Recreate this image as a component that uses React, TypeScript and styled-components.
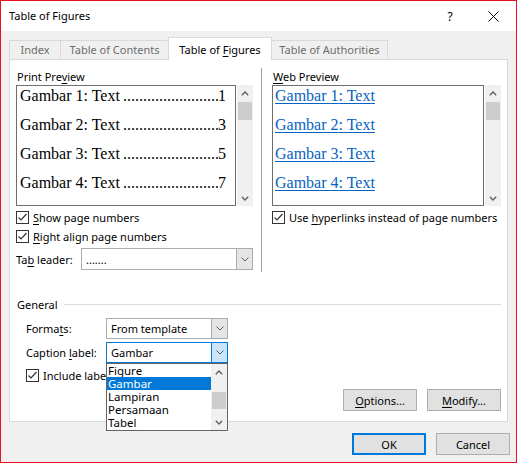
import React from "react";
import styled, { createGlobalStyle, css } from "styled-components";

const GlobalStyle = createGlobalStyle`
  html, body { margin: 0; padding: 0; background: #ffffff; }
  body { font-family: "Noto Sans", "DejaVu Sans", sans-serif; font-size: 11px; color: #000; }
  * { box-sizing: border-box; }
`;

const Window = styled.div`
  position: relative;
  width: 517px;
  height: 463px;
  border: 1px solid #e81123;
  background: #f0f0f0;
  display: flex;
  flex-direction: column;
`;

const TitleBar = styled.div`
  height: 30px;
  background: #ffffff;
  display: flex;
  align-items: center;
  padding-left: 8px;
`;

const Title = styled.div`
  flex: 1;
  line-height: 16px;
`;

const TitleButton = styled.div<{ $w: number }>`
  width: ${(p) => p.$w}px;
  height: 30px;
  display: flex;
  align-items: center;
  justify-content: center;
  font-size: 12px;
`;

const Body = styled.div`
  display: flex;
  flex-direction: column;
  padding: 0 8px;
`;

const TabRow = styled.div`
  position: relative;
  z-index: 1;
  display: flex;
  align-items: flex-end;
  height: 22px;
  margin-top: 6px;
`;

const Tab = styled.div<{ $w: number; $active?: boolean }>`
  width: ${(p) => p.$w}px;
  height: 19px;
  margin-left: -1px;
  border: 1px solid #d9d9d9;
  border-bottom: none;
  background: #f0f0f0;
  color: #6d6d6d;
  display: flex;
  justify-content: center;
  align-items: flex-start;
  padding-top: 1px;
  line-height: 16px;
  &:first-child { margin-left: 0; }
  ${(p) =>
    p.$active &&
    css`
      height: 23px;
      margin-bottom: -1px;
      background: #ffffff;
      color: #000;
      padding-top: 4px;
    `}
`;

const Panel = styled.div`
  height: 363px;
  background: #ffffff;
  border: 1px solid #d9d9d9;
  display: flex;
  flex-direction: column;
`;

const TopSection = styled.div`
  display: flex;
  padding: 8px 6px 0 6px;
`;

const Column = styled.div<{ $w: number }>`
  width: ${(p) => p.$w}px;
  display: flex;
  flex-direction: column;
`;

const Divider = styled.div`
  width: 1px;
  height: 204px;
  background: #a0a0a0;
  margin: 0 10px 0 8px;
`;

const GroupLabel = styled.div`
  line-height: 17px;
  height: 17px;
  padding-left: 1px;
`;

const Mn = styled.span`
  text-decoration: underline;
  text-underline-offset: 2px;
  text-decoration-thickness: 1px;
`;

const PreviewRow = styled.div`
  display: flex;
  gap: 1px;
  height: 121px;
`;

const PreviewBox = styled.div<{ $padR: number }>`
  flex: 1;
  min-width: 0;
  border: 1px solid #6e6e6e;
  padding: 1px ${(p) => p.$padR}px 0 2px;
  display: flex;
  flex-direction: column;
  gap: 11px;
  overflow: hidden;
  font-family: "Liberation Serif", "Times New Roman", serif;
  font-size: 16px;
`;

const PrintLine = styled.div`
  display: flex;
  line-height: 18px;
  white-space: nowrap;
  padding-left: 1px;
`;

const Leader = styled.span`
  flex: 1;
  overflow: hidden;
  white-space: nowrap;
  text-align: right;
  padding-left: 3px;
`;

const WebLine = styled.div`
  line-height: 18px;
  white-space: nowrap;
  color: #0563c1;
  span {
    text-decoration: underline;
    text-underline-offset: 2px;
    text-decoration-thickness: 1px;
  }
`;

const ScrollBar = styled.div<{ $w: number }>`
  width: ${(p) => p.$w}px;
  background: #f0f0f0;
  display: flex;
  flex-direction: column;
`;

const ScrollArrow = styled.div`
  height: 16px;
  display: flex;
  align-items: center;
  justify-content: center;
  flex-shrink: 0;
`;

const ScrollTrack = styled.div`
  flex: 1;
  display: flex;
  flex-direction: column;
`;

const Thumb = styled.div<{ $top: number; $h: number }>`
  margin-top: ${(p) => p.$top}px;
  height: ${(p) => p.$h}px;
  background: #cdcdcd;
  margin-left: 1px;
  margin-right: 1px;
`;

const CheckRow = styled.div<{ $mt?: number; $pl?: number }>`
  display: flex;
  align-items: center;
  gap: 4px;
  height: 19px;
  margin-top: ${(p) => p.$mt ?? 0}px;
  padding-left: ${(p) => p.$pl ?? 0}px;
  white-space: nowrap;
`;

const Box = styled.div`
  width: 13px;
  height: 13px;
  border: 1px solid #333333;
  background: #ffffff;
  display: flex;
  align-items: center;
  justify-content: center;
  flex-shrink: 0;
`;

const FieldRow = styled.div<{ $h: number; $mt: number; $pl: number; $lw: number }>`
  display: flex;
  align-items: center;
  height: ${(p) => p.$h}px;
  margin-top: ${(p) => p.$mt}px;
  padding-left: ${(p) => p.$pl}px;
  & > label {
    width: ${(p) => p.$lw}px;
    flex-shrink: 0;
  }
`;

const ComboAnchor = styled.div<{ $w?: number }>`
  position: relative;
  height: 100%;
  ${(p) => (p.$w ? `width: ${p.$w}px;` : "flex: 1;")}
`;

const Combo = styled.div<{ $focused?: boolean }>`
  display: flex;
  height: 100%;
  border: 1px solid ${(p) => (p.$focused ? "#0078d7" : "#acacac")};
  background: #ffffff;
`;

const ComboText = styled.div`
  flex: 1;
  display: flex;
  align-items: center;
  padding-left: 4px;
  white-space: nowrap;
`;

const ComboButton = styled.div<{ $focused?: boolean }>`
  width: 16px;
  display: flex;
  align-items: center;
  justify-content: center;
  background: ${(p) => (p.$focused ? "#cce4f7" : "#e5e5e5")};
  border-left: 1px solid ${(p) => (p.$focused ? "#0078d7" : "#acacac")};
`;

const DropList = styled.div`
  position: absolute;
  z-index: 5;
  top: 100%;
  left: 0;
  width: 100%;
  height: 68px;
  border: 1px solid #646464;
  background: #ffffff;
  display: flex;
`;

const Items = styled.div`
  flex: 1;
  display: flex;
  flex-direction: column;
`;

const Item = styled.div<{ $sel?: boolean }>`
  height: 13px;
  line-height: 13px;
  padding-left: 1px;
  white-space: nowrap;
  font-size: 11.5px;
  ${(p) =>
    p.$sel &&
    css`
      background: #0078d7;
      color: #ffffff;
    `}
`;

const GeneralHeader = styled.div`
  display: flex;
  align-items: center;
  height: 16px;
  margin-top: 24px;
  padding: 0 6px 0 7px;
`;

const HeaderLine = styled.div`
  flex: 1;
  height: 1px;
  background: #dcdcdc;
  margin-left: 6px;
`;

const ButtonRow = styled.div<{ $mt: number; $pr: number }>`
  display: flex;
  justify-content: flex-end;
  gap: 10px;
  margin-top: ${(p) => p.$mt}px;
  padding-right: ${(p) => p.$pr}px;
`;

const Button = styled.div<{ $default?: boolean }>`
  width: 74px;
  height: 22px;
  background: #e1e1e1;
  border: 1px solid #adadad;
  display: flex;
  align-items: center;
  justify-content: center;
  ${(p) =>
    p.$default &&
    css`
      border: 2px solid #0078d7;
    `}
`;

const Chevron = ({ up = false }: { up?: boolean }) => (
  <svg width="8" height="5" viewBox="0 0 8 5">
    <polyline
      points={up ? "0.8,4.2 4,1 7.2,4.2" : "0.8,0.8 4,4 7.2,0.8"}
      fill="none"
      stroke="#606060"
      strokeWidth="1.4"
    />
  </svg>
);

const ComboChevron = () => (
  <svg width="8" height="5" viewBox="0 0 8 5">
    <polyline points="0.5,0.5 4,4 7.5,0.5" fill="none" stroke="#606060" strokeWidth="1" />
  </svg>
);

const Check = () => (
  <svg width="11" height="11" viewBox="0 0 11 11">
    <polyline points="1.5,5.5 4,8 9.5,2" fill="none" stroke="#333333" strokeWidth="1.2" />
  </svg>
);

const CheckBox = ({ children, mt, pl }: { children: React.ReactNode; mt?: number; pl?: number }) => (
  <CheckRow $mt={mt} $pl={pl}>
    <Box>
      <Check />
    </Box>
    <span>{children}</span>
  </CheckRow>
);

const Scroller = ({ w, top, h }: { w: number; top: number; h: number }) => (
  <ScrollBar $w={w}>
    <ScrollArrow>
      <Chevron up />
    </ScrollArrow>
    <ScrollTrack>
      <Thumb $top={top} $h={h} />
    </ScrollTrack>
    <ScrollArrow>
      <Chevron />
    </ScrollArrow>
  </ScrollBar>
);

const entries = [
  { n: 1, p: 1 },
  { n: 2, p: 3 },
  { n: 3, p: 5 },
  { n: 4, p: 7 },
];

const DOTS = ".".repeat(24);

export default function App() {
  return (
    <>
      <GlobalStyle />
      <Window>
        <TitleBar>
          <Title>Table of Figures</Title>
          <TitleButton $w={40}>?</TitleButton>
          <TitleButton $w={46}>
            <svg width="11" height="11" viewBox="0 0 11 11">
              <line x1="0.5" y1="0.5" x2="10.5" y2="10.5" stroke="#000" strokeWidth="1" />
              <line x1="10.5" y1="0.5" x2="0.5" y2="10.5" stroke="#000" strokeWidth="1" />
            </svg>
          </TitleButton>
        </TitleBar>
        <Body>
          <TabRow>
            <Tab $w={52}>Index</Tab>
            <Tab $w={109}>Table of Contents</Tab>
            <Tab $w={104} $active>
              <span>
                Table of <Mn>F</Mn>igures
              </span>
            </Tab>
            <Tab $w={117}>Table of Authorities</Tab>
          </TabRow>
          <Panel>
            <TopSection>
              <Column $w={237}>
                <GroupLabel>
                  Print Pre<Mn>v</Mn>iew
                </GroupLabel>
                <PreviewRow>
                  <PreviewBox $padR={9}>
                    {entries.map((e) => (
                      <PrintLine key={e.n}>
                        <span>Gambar {e.n}: Text</span>
                        <Leader>{DOTS}</Leader>
                        <span>{e.p}</span>
                      </PrintLine>
                    ))}
                  </PreviewBox>
                  <Scroller w={16} top={1} h={18} />
                </PreviewRow>
                <CheckBox mt={2}>
                  <Mn>S</Mn>how page numbers
                </CheckBox>
                <CheckBox>
                  <Mn>R</Mn>ight align page numbers
                </CheckBox>
                <FieldRow $h={22} $mt={2} $pl={0} $lw={65}>
                  <label>
                    Ta<Mn>b</Mn> leader:
                  </label>
                  <ComboAnchor>
                    <Combo>
                      <ComboText>.......</ComboText>
                      <ComboButton>
                        <ComboChevron />
                      </ComboButton>
                    </Combo>
                  </ComboAnchor>
                </FieldRow>
              </Column>
              <Divider />
              <Column $w={229}>
                <GroupLabel>
                  <Mn>W</Mn>eb Preview
                </GroupLabel>
                <PreviewRow>
                  <PreviewBox $padR={4}>
                    {entries.map((e) => (
                      <WebLine key={e.n}>
                        <span>Gambar {e.n}: Text</span>
                      </WebLine>
                    ))}
                  </PreviewBox>
                  <Scroller w={16} top={1} h={18} />
                </PreviewRow>
                <CheckBox mt={2}>
                  Use <Mn>h</Mn>yperlinks instead of page numbers
                </CheckBox>
              </Column>
            </TopSection>

            <GeneralHeader>
              <span>General</span>
              <HeaderLine />
            </GeneralHeader>

            <FieldRow $h={21} $mt={6} $pl={16} $lw={80}>
              <label>
                Forma<Mn>t</Mn>s:
              </label>
              <ComboAnchor $w={122}>
                <Combo>
                  <ComboText>From template</ComboText>
                  <ComboButton>
                    <ComboChevron />
                  </ComboButton>
                </Combo>
              </ComboAnchor>
            </FieldRow>
            <FieldRow $h={21} $mt={3} $pl={16} $lw={80}>
              <label>
                Caption <Mn>l</Mn>abel:
              </label>
              <ComboAnchor $w={122}>
                <Combo $focused>
                  <ComboText>Gambar</ComboText>
                  <ComboButton $focused>
                    <ComboChevron />
                  </ComboButton>
                </Combo>
                <DropList>
                  <Items>
                    <Item>Figure</Item>
                    <Item $sel>Gambar</Item>
                    <Item>Lampiran</Item>
                    <Item>Persamaan</Item>
                    <Item>Tabel</Item>
                  </Items>
                  <Scroller w={16} top={12} h={17} />
                </DropList>
              </ComboAnchor>
            </FieldRow>
            <CheckBox mt={3} pl={16}>
              Include label and <Mn>n</Mn>umber
            </CheckBox>
            <ButtonRow $mt={4} $pr={6}>
              <Button>
                <span>
                  <Mn>O</Mn>ptions...
                </span>
              </Button>
              <Button>
                <span>
                  <Mn>M</Mn>odify...
                </span>
              </Button>
            </ButtonRow>
          </Panel>
        </Body>
        <ButtonRow $mt={11} $pr={6}>
          <Button $default>OK</Button>
          <Button>Cancel</Button>
        </ButtonRow>
      </Window>
    </>
  );
}
